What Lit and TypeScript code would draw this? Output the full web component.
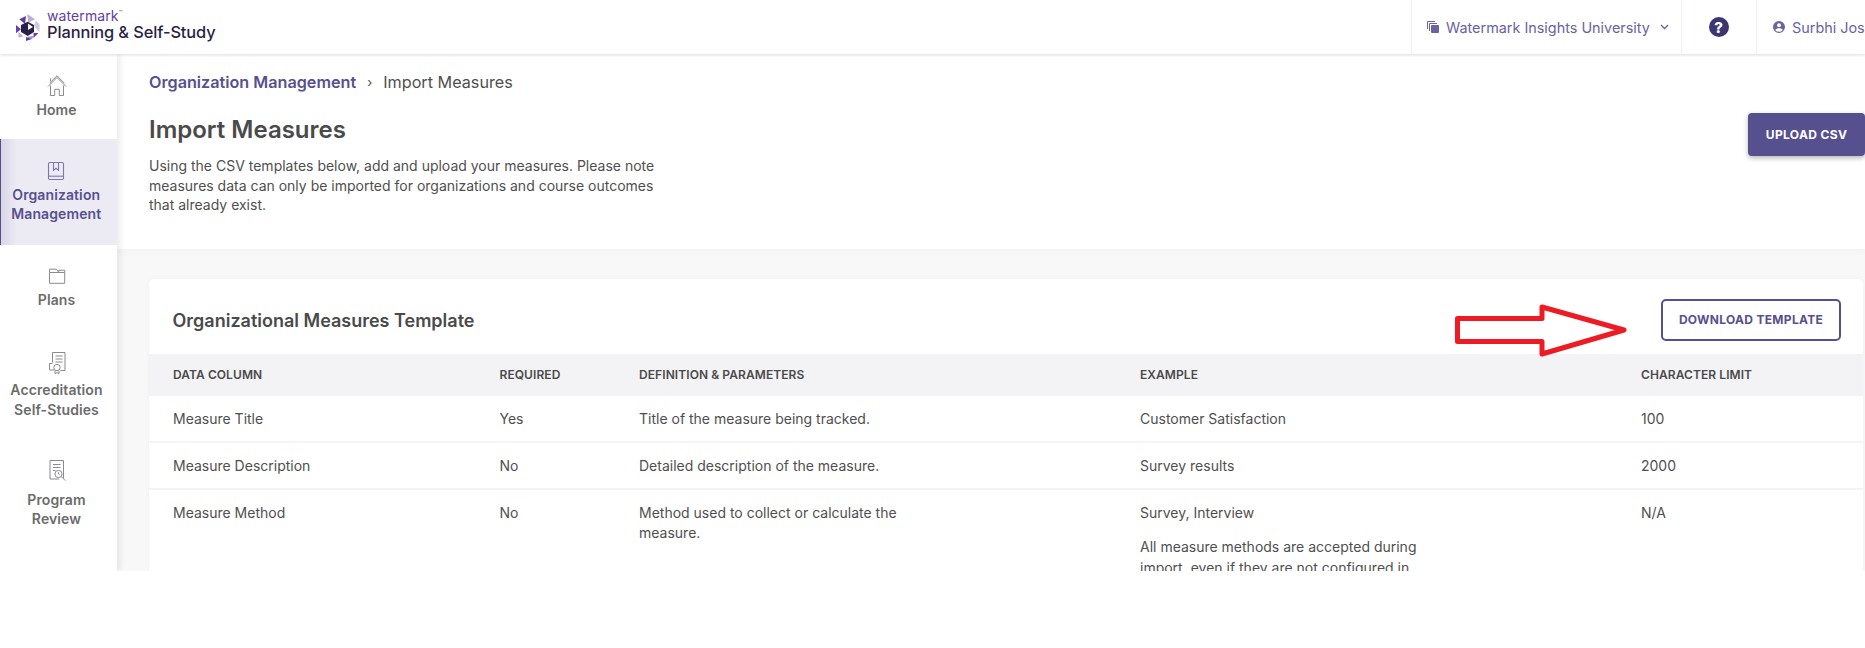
import { LitElement, html, css, svg } from "lit";
import { customElement } from "lit/decorators.js";

const icons: Record<string, any> = {
  home: svg`<svg class="ic" width="24" height="24" viewBox="0 0 24 24" fill="none" stroke="currentColor" stroke-width="1"><path d="M3 12.500 12 3.500l9 9"/><path d="M4.600 9.200 12 1.800l7.400 7.400"/><path d="M5.500 11.500V21.500h4.200v-6.200h4.600v6.200h4.200V11.500"/><path d="M5.500 4.500v3"/></svg>`,
  org: svg`<svg class="ic" width="24" height="24" viewBox="0 0 24 24" fill="none" stroke="currentColor" stroke-width="1.100"><rect x="4.500" y="3.500" width="15" height="17" rx="1.400"/><path d="M4.500 17.200h15"/><path d="M9.500 3.500v7.800l2.500-2 2.500 2V3.500"/></svg>`,
  plans: svg`<svg class="ic" width="24" height="24" viewBox="0 0 24 24" fill="none" stroke="currentColor" stroke-width="1"><path d="M4.500 8.500V5.200h7l2.200 3.300"/><path d="M4.500 8.500h15.200v10.800H4.500z"/><path d="M13.700 8.500V6.200h6v2.300"/></svg>`,
  accred: svg`<svg class="ic tall" width="24" height="29" viewBox="0 0 24 29" fill="none" stroke="currentColor" stroke-width="1"><path d="M7.500 13.500V3.500h12.500v18h-4.500"/><path d="M10.500 7h7M10.500 10h7M10.500 13h7"/><path d="M7.500 14.500H4.500v6.500h4.500"/><circle cx="12" cy="18.500" r="3.200"/><path d="M10 21.500v3.200l2-1.200 2 1.200v-3.200"/></svg>`,
  program: svg`<svg class="ic tall" width="24" height="29" viewBox="0 0 24 29" fill="none" stroke="currentColor" stroke-width="1"><path d="M5 1.500h13.500v17.500M5 1.500v18.500h9"/><path d="M8 5.500h7.500M8 8.500h7.500M8 11.500h2.500"/><circle cx="13.500" cy="15" r="3.600"/><path d="M13.500 13.200V15l1.200.9M16.300 17.600l4 4"/></svg>`,
};

@customElement("app-root")
export class AppRoot extends LitElement {
  static styles = css`
    :host { display: block; width: 1865px; height: 648px; background: #fff; font-family: Inter, "Liberation Sans", sans-serif; color: #4f4f4f; overflow: hidden; }
    .frame { position: relative; height: 571px; overflow: hidden; display: flex; flex-direction: column; }
    .top { height: 54px; flex: none; display: flex; align-items: stretch; background: #fff; box-shadow: 0 1px 3px rgba(0,0,0,.14); position: relative; z-index: 3; }
    .brand { display: flex; align-items: center; padding-left: 16px; gap: 7px; flex: 1; }
    .brand-text { display: flex; flex-direction: column; line-height: 1; }
    .wm { font-size: 14px; color: #5f3ea3; letter-spacing: .1px; line-height: 13px; margin-top: -4px; }
    .wm sup { font-size: 6px; vertical-align: top; line-height: 8px; letter-spacing: 0; }
    .pss { font-size: 16.4px; font-weight: 500; color: #2a1f44; line-height: 20px; letter-spacing: -.1px; }
    .tcell { display: flex; align-items: center; border-left: 1px solid #eff0f2; color: #6a63a1; font-size: 14.4px; }
    .inst { width: 270px; padding-left: 15px; gap: 7px; box-sizing: border-box; }
    .chev { margin-left: 3px; }
    .help { width: 75px; justify-content: center; box-sizing: border-box; padding-right: 1px; }
    .qm { width: 20px; height: 20px; border-radius: 50%; background: #3d3570; color: #fff; font-size: 15px; font-weight: 800; display: flex; align-items: center; justify-content: center; line-height: 1; }
    .user { width: 109px; padding-left: 16px; gap: 7px; box-sizing: border-box; white-space: nowrap; overflow: hidden; }
    .body { flex: 1; display: flex; min-height: 0; }
    .side { width: 117px; flex: none; background: #fff; box-shadow: 2px 0 8px rgba(0,0,0,.1); position: relative; z-index: 2; }
    .nav { display: flex; flex-direction: column; align-items: center; padding: 19.5px 4px 20px 0; gap: 2px; color: #6c6c6c; font-size: 14px; font-weight: 600; letter-spacing: .1px; line-height: 19.5px; text-align: center; }
    .nav .ic { display: block; color: #8a8a90; }
    .nav.active { color: #57508f; background: linear-gradient(to right, #d9d6e6, #ecebf4 16px); border-left: 1.5px solid #57508f; padding-right: 5.5px; padding-bottom: 21px; box-sizing: border-box; }
    .nav.active .ic { color: #7d76b5; }
    .main { flex: 1; min-width: 0; background: #f8f8f8; }
    .head { height: 195px; box-sizing: border-box; background: #fff; padding: 17px 0 0 32px; position: relative; box-shadow: 0 2px 8px rgba(0,0,0,.03); }
    .crumb { display: flex; align-items: center; font-size: 16.2px; line-height: 22px; }
    .crumb a { color: #57508f; font-weight: 600; }
    .crumb i { font-style: normal; margin: 0 11px; font-size: 13px; }
    h1 { margin: 20px 0 9px; font-size: 24px; line-height: 34px; font-weight: 600; color: #4a4a4a; }
    .lead { margin: 0; width: 520px; font-size: 14px; line-height: 19.5px; }
    .upload { position: absolute; right: 0; top: 59px; width: 117px; height: 43px; border: 0; border-radius: 4px; background: #57508f; color: #fff; font: 700 12px Inter, sans-serif; letter-spacing: .35px; box-shadow: 0 2px 5px rgba(0,0,0,.3); padding: 0; }
    .card { margin: 30px 2px 0 32px; background: #fff; border-radius: 5px 5px 0 0; box-shadow: 0 0 4px rgba(0,0,0,.04); }
    .card-h { display: flex; align-items: center; justify-content: space-between; padding: 19.5px 22px 13px 23.5px; }
    h2 { margin: 0; padding-top: 2px; font-size: 18px; font-weight: 600; color: #4a4a4a; }
    .dl { width: 180px; height: 42px; box-sizing: border-box; background: #fff; border: 2px solid #57508f; border-radius: 5px; color: #57508f; font: 700 12px Inter, sans-serif; letter-spacing: .3px; padding: 0; }
    .row { display: grid; grid-template-columns: 326.5px 139.5px 501px 501px 1fr; padding-left: 24px; font-size: 14px; line-height: 20.5px; }
    .thead { background: #f3f3f5; height: 42px; align-items: center; font-size: 12px; font-weight: 600; letter-spacing: .08px; line-height: 16px; color: #4a4a4a; }
    .tr { padding-top: 13px; padding-bottom: 11.5px; border-bottom: 2px solid #f4f4f6; }
    .tr.last { border-bottom: 0; }
    .cell { max-width: 300px; }
    .cell p { margin: 0 0 14px; }
    .arrow { position: absolute; left: 1450px; top: 298px; z-index: 4; display: block; }
  `;

  render() {
    return html`<div class="frame">
      <header class="top">
        <div class="brand">
          <svg width="24" height="27" viewBox="0 0 24 27">
            <polygon points="11.300,0 19,5.300 12.300,8.700" fill="#b9aed8"/>
            <polygon points="20,6.500 23.500,10 23.500,18 18,12" fill="#cfc8e5"/>
            <polygon points="3.300,5.300 10,2 9,10" fill="#5f3ea3"/>
            <polygon points="0,11 5,15.300 0,19.300" fill="#6b3fb0"/>
            <polygon points="2.500,18 7.500,22.500 2.500,23.500" fill="#b9aed8"/>
            <polygon points="10,23 10,27 16,25" fill="#5f3ea3"/>
            <polygon points="10,23 16,25 17.500,22" fill="#9d8bc9"/>
            <polygon points="17.500,19 22.500,19 17.500,24" fill="#6b3fb0"/>
            <polygon points="5,11 11.700,7.700 18,11 18,18 11.700,22 5,18" fill="#2a1f44"/>
            <polygon points="12,9.500 17,13 12,16" fill="#fff"/>
          </svg>
          <div class="brand-text">
            <span class="wm">watermark<sup>™</sup></span>
            <span class="pss">Planning &amp; Self-Study</span>
          </div>
        </div>
        <div class="tcell inst">
          <svg width="12" height="12" viewBox="0 0 12 12" fill="none" stroke="currentColor" stroke-width="1"><path d="M.5 8V.5H8"/><path d="M2.500 10V2.500H10"/><rect x="4" y="4" width="8" height="8" rx="1" fill="currentColor" stroke="none"/></svg>
          <span>Watermark Insights University</span>
          <svg class="chev" width="9" height="6" viewBox="0 0 9 6" fill="none" stroke="currentColor" stroke-width="1.300"><path d="M1 1l3.500 3.500L8 1"/></svg>
        </div>
        <div class="tcell help"><span class="qm">?</span></div>
        <div class="tcell user">
          <svg width="12" height="12" viewBox="0 0 24 24" fill="currentColor" style="flex:none"><path d="M12 0a12 12 0 1 0 0 24 12 12 0 0 0 0-24zm0 4.500a4 4 0 1 1 0 8 4 4 0 0 1 0-8zm0 17a9.600 9.600 0 0 1-7.600-3.700c1-2 4.600-3.100 7.600-3.100s6.600 1.100 7.600 3.100A9.600 9.600 0 0 1 12 21.500z"/></svg>
          <span>Surbhi Joshi</span>
        </div>
      </header>
      <div class="body">
        <nav class="side">
          <div class="nav">${icons.home}<span>Home</span></div>
          <div class="nav active">${icons.org}<span>Organization<br />Management</span></div>
          <div class="nav">${icons.plans}<span>Plans</span></div>
          <div class="nav">${icons.accred}<span>Accreditation<br />Self-Studies</span></div>
          <div class="nav">${icons.program}<span>Program<br />Review</span></div>
        </nav>
        <main class="main">
          <section class="head">
            <div class="crumb"><a>Organization Management</a><i>›</i><span>Import Measures</span></div>
            <h1>Import Measures</h1>
            <p class="lead">Using the CSV templates below, add and upload your measures. Please note measures data can only be imported for organizations and course outcomes that already exist.</p>
            <button class="upload">UPLOAD CSV</button>
          </section>
          <section class="card">
            <div class="card-h"><h2>Organizational Measures Template</h2><button class="dl">DOWNLOAD TEMPLATE</button></div>
            <div class="row thead"><div>DATA COLUMN</div><div>REQUIRED</div><div>DEFINITION &amp; PARAMETERS</div><div>EXAMPLE</div><div>CHARACTER LIMIT</div></div>
            <div class="row tr"><div>Measure Title</div><div>Yes</div><div class="cell">Title of the measure being tracked.</div><div class="cell">Customer Satisfaction</div><div>100</div></div>
            <div class="row tr"><div>Measure Description</div><div>No</div><div class="cell">Detailed description of the measure.</div><div class="cell">Survey results</div><div>2000</div></div>
            <div class="row tr last"><div>Measure Method</div><div>No</div><div class="cell">Method used to collect or calculate the measure.</div><div class="cell"><p>Survey, Interview</p><p>All measure methods are accepted during import, even if they are not configured in</p></div><div>N/A</div></div>
          </section>
        </main>
      </div>
      <svg class="arrow" width="180" height="62" viewBox="1450 298 180 62"><polygon points="1457.500,318.500 1542,318.500 1542,307 1624,330 1542,354 1542,341.500 1457.500,341.500" fill="#fff" stroke="#ed1c24" stroke-width="5" stroke-linejoin="round"/></svg>
    </div>`;
  }
}
